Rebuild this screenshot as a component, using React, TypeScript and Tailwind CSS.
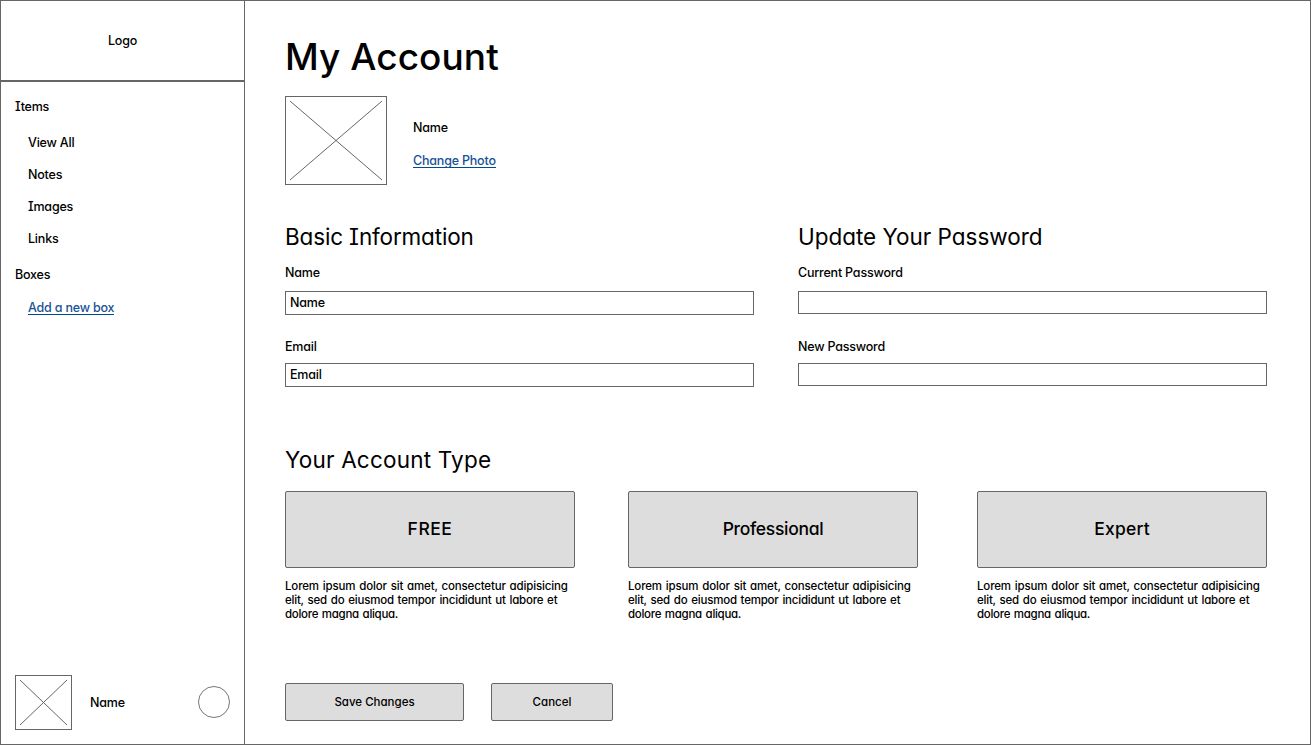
import { useId } from 'react';
import type { ReactNode } from 'react';

const lorem = [
  { text: 'Lorem ipsum dolor sit amet, consectetur adipisicing', track: 'tracking-[-0.16px]' },
  { text: 'elit, sed do eiusmod tempor incididunt ut labore et', track: 'tracking-[-0.22px]' },
  { text: 'dolore magna aliqua.', track: 'tracking-[-0.3px]' },
];

const navItems = ['View All', 'Notes', 'Images', 'Links'];

const plans = [
  { name: 'FREE', track: 'tracking-[0.5px]' },
  { name: 'Professional', track: 'tracking-[-0.3px]' },
  { name: 'Expert', track: 'tracking-[0.2px]' },
];

function ImagePlaceholder({ width, height }: { width: number; height: number }) {
  return (
    <svg width={width} height={height} className="block shrink-0" fill="none" stroke="#666666">
      <rect x="0.5" y="0.5" width={width - 1} height={height - 1} />
      <path d={`M5 5L${width - 5} ${height - 5}M${width - 5} 5L5 ${height - 5}`} />
    </svg>
  );
}

function TextLink({ children, className = '' }: { children: ReactNode; className?: string }) {
  return (
    <a
      href="#"
      className={`block h-[15px] w-fit whitespace-nowrap border-b border-[#004b8d] text-[#1a5296] ${className}`}
    >
      {children}
    </a>
  );
}

function Field({
  label,
  value,
  type = 'text',
  inputClass,
}: {
  label: string;
  value?: string;
  type?: string;
  inputClass: string;
}) {
  const id = useId();
  return (
    <div className="flex flex-col">
      <label htmlFor={id} className="w-fit">
        {label}
      </label>
      <input
        id={id}
        type={type}
        defaultValue={value}
        className={`block w-[469px] border border-[#666666] bg-white px-1 pb-1 pt-0.5 leading-4 outline-none ${inputClass}`}
      />
    </div>
  );
}

export default function App() {
  return (
    <div className="flex h-[745px] w-[1311px] overflow-hidden border border-[#666666] bg-white font-['Inter',sans-serif] text-[12.5px] font-[450] leading-4 tracking-[-0.2px] text-black [font-feature-settings:'cv08','cv11']">
      <aside className="flex w-[244px] shrink-0 flex-col border-r border-[#666666]">
        <div className="flex h-[81px] shrink-0 items-start justify-center border-b-2 border-[#666666] pt-8">
          Logo
        </div>
        <nav className="flex flex-col pl-3.5 pt-[17px]">
          <span>Items</span>
          <ul className="mt-5 flex flex-col gap-4 pl-[13px]">
            {navItems.map((item) => (
              <li key={item}>{item}</li>
            ))}
          </ul>
          <span className="mt-5">Boxes</span>
          <TextLink className="ml-[13px] mt-[17px]">Add a new box</TextLink>
        </nav>
        <div className="mb-3.5 mt-auto flex items-center px-3.5">
          <ImagePlaceholder width={57} height={55} />
          <span className="ml-[18px]">Name</span>
          <div className="mb-0.5 ml-auto size-8 rounded-full border border-[#777777]" />
        </div>
      </aside>

      <main className="flex flex-col pl-10 pt-8">
        <h1 className="h-12 w-fit text-[37px] font-medium leading-[48px] tracking-[0.05px]">
          My Account
        </h1>
        <section className="mt-[15px] flex">
          <ImagePlaceholder width={102} height={89} />
          <div className="ml-[26px] flex flex-col gap-[17px] pt-6">
            <span>Name</span>
            <TextLink>Change Photo</TextLink>
          </div>
        </section>

        <div className="mt-[38px] flex gap-11">
          <section className="flex w-[469px] flex-col">
            <h2 className="w-fit text-[22.5px] font-normal leading-7 tracking-[-0.15px]">
              Basic Information
            </h2>
            <div className="mt-3.5">
              <Field label="Name" value="Name" inputClass="mt-2.5 h-6" />
            </div>
            <div className="mt-6">
              <Field label="Email" value="Email" inputClass="mt-2 h-6" />
            </div>
          </section>
          <section className="flex w-[469px] flex-col">
            <h2 className="w-fit text-[22.5px] font-normal leading-7 tracking-[-0.02px]">
              Update Your Password
            </h2>
            <div className="mt-3.5">
              <Field label="Current Password" type="password" inputClass="mt-2.5 h-[23px]" />
            </div>
            <div className="mt-[25px]">
              <Field label="New Password" type="password" inputClass="mt-2 h-[23px]" />
            </div>
          </section>
        </div>

        <section className="mt-[59px] flex flex-col">
          <h2 className="w-fit text-[22.5px] font-normal leading-7 tracking-[0.2px]">
            Your Account Type
          </h2>
          <div className="mt-[17px] grid grid-cols-[343px_349px_290px]">
            {plans.map((plan) => (
              <div key={plan.name} className="flex w-[290px] flex-col">
                <button
                  className={`h-[77px] rounded-[2px] border border-[#666666] bg-[#dddddd] pb-0.5 text-[17.5px] ${plan.track}`}
                >
                  {plan.name}
                </button>
                <p className="mt-[11px] flex flex-col text-[11.5px] leading-[14px] [word-spacing:1px]">
                  {lorem.map((line) => (
                    <span key={line.text} className={`w-fit whitespace-nowrap ${line.track}`}>
                      {line.text}
                    </span>
                  ))}
                </p>
              </div>
            ))}
          </div>
        </section>

        <div className="mt-[62px] flex gap-[27px] text-[11.5px] tracking-normal">
          <button className="h-[38px] w-[179px] rounded-[2px] border border-[#666666] bg-[#dddddd]">
            Save Changes
          </button>
          <button className="h-[38px] w-[122px] rounded-[2px] border border-[#666666] bg-[#dddddd]">
            Cancel
          </button>
        </div>
      </main>
    </div>
  );
}
